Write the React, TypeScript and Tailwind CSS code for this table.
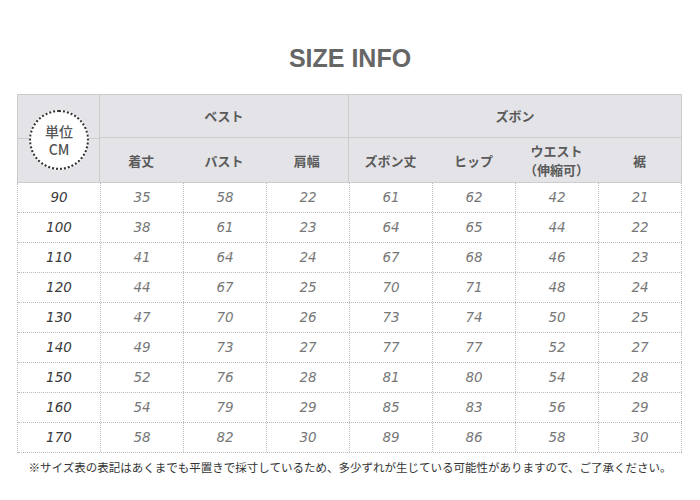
const rows = [
  ['90', '35', '58', '22', '61', '62', '42', '21'],
  ['100', '38', '61', '23', '64', '65', '44', '22'],
  ['110', '41', '64', '24', '67', '68', '46', '23'],
  ['120', '44', '67', '25', '70', '71', '48', '24'],
  ['130', '47', '70', '26', '73', '74', '50', '25'],
  ['140', '49', '73', '27', '77', '77', '52', '27'],
  ['150', '52', '76', '28', '81', '80', '54', '28'],
  ['160', '54', '79', '29', '85', '83', '56', '29'],
  ['170', '58', '82', '30', '89', '86', '58', '30'],
];

const jp = "font-['Noto_Sans_CJK_JP',sans-serif]";

const SubHead = ({ children }: { children: React.ReactNode }) => (
  <div className={`w-[83px] flex items-center justify-center text-center text-[13px] font-bold leading-[19px] text-[#5a5a5a] ${jp}`}>
    {children}
  </div>
);

export default function App() {
  return (
    <div className="w-[700px] h-[500px] bg-white">
      <h1 className="pt-[42px] h-[94px] text-center text-[25px] leading-[32px] font-bold text-[#666] font-['Liberation_Sans',Arial,sans-serif]">
        SIZE INFO
      </h1>

      <div className="ml-[17px] w-[665px]">
        {/* header */}
        <div className="flex h-[89px] bg-[#e4e4e8] border border-[#cccccc]">
          <div className="relative w-[83px] border-r border-[#cccccc]">
            <div className="absolute left-0 right-0 top-[43px] border-t border-[#cccccc]" />
            <div className={`absolute left-[11px] top-[15px] w-[60px] h-[60px] rounded-full bg-white border-2 border-dotted border-[#333] flex flex-col items-center justify-center text-[14px] font-medium text-[#555] ${jp}`}>
              <span className="block h-[18px] leading-[18px]">単位</span>
              <span className="block h-[18px] leading-[18px]">CM</span>
            </div>
          </div>
          <div className="w-[249px] flex flex-col border-r border-[#cccccc]">
            <div className={`h-[43px] flex items-center justify-center text-[13px] font-bold text-[#5a5a5a] border-b border-[#cccccc] ${jp}`}>ベスト</div>
            <div className="flex-1 flex">
              <SubHead>着丈</SubHead>
              <SubHead>バスト</SubHead>
              <SubHead>肩幅</SubHead>
            </div>
          </div>
          <div className="flex-1 flex flex-col">
            <div className={`h-[43px] flex items-center justify-center text-[13px] font-bold text-[#5a5a5a] border-b border-[#cccccc] ${jp}`}>ズボン</div>
            <div className="flex-1 flex">
              <SubHead>ズボン丈</SubHead>
              <SubHead>ヒップ</SubHead>
              <SubHead>
                ウエスト
                <br />
                （伸縮可）
              </SubHead>
              <SubHead>裾</SubHead>
            </div>
          </div>
        </div>

        {/* body */}
        <div className="border-l border-dotted border-[#bbbbbb] font-['DejaVu_Sans',Verdana,sans-serif] italic text-[13.5px]">
          {rows.map((r) => (
            <div key={r[0]} className="flex h-[30px] border-b border-dotted border-[#bbbbbb]">
              {r.map((v, i) => (
                <div
                  key={i}
                  className={`w-[83px] flex items-center justify-center border-r border-dotted border-[#bbbbbb] ${i === 0 ? 'text-[#3a3a3a]' : 'text-[#777]'}`}
                >
                  {v}
                </div>
              ))}
            </div>
          ))}
        </div>
      </div>

      <p className={`mt-[6px] text-center text-[11.5px] leading-[16px] text-[#333] ${jp}`}>
        ※サイズ表の表記はあくまでも平置きで採寸しているため、多少ずれが生じている可能性がありますので、ご了承ください。
      </p>
    </div>
  );
}
